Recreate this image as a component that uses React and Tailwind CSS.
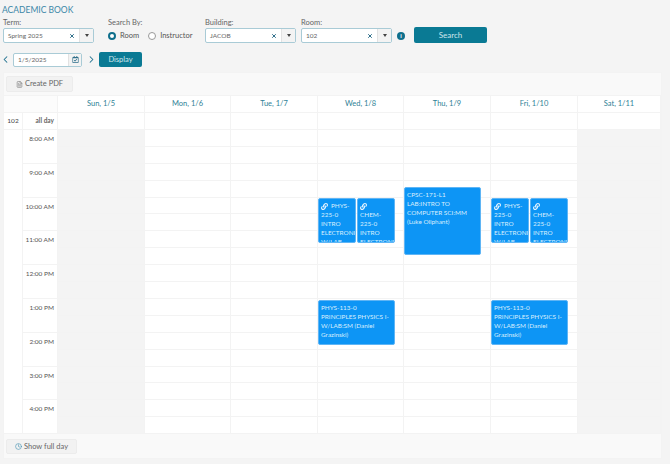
import { ChevronLeft, ChevronRight, Clock, FileText, X } from 'lucide-react'
import { FaLink, FaRegCalendarCheck } from 'react-icons/fa'

const DAYS = [
  { label: 'Sun, 1/5', w: 'w-[87px]', off: true },
  { label: 'Mon, 1/6', w: 'w-[86px]' },
  { label: 'Tue, 1/7', w: 'w-[87px]' },
  { label: 'Wed, 1/8', w: 'w-[86px]', events: 'wed' },
  { label: 'Thu, 1/9', w: 'w-[87px]', events: 'thu' },
  { label: 'Fri, 1/10', w: 'w-[87px]', events: 'wed' },
  { label: 'Sat, 1/11', w: 'flex-1', off: true },
]

const HOURS = ['8:00 AM', '9:00 AM', '10:00 AM', '11:00 AM', '12:00 PM', '1:00 PM', '2:00 PM', '3:00 PM', '4:00 PM']

const borderClass = 'border-[#f3f3f3]'

function Combo({ value, width }) {
  return (
    <div className={`flex items-center h-[15px] border border-[#a9cbd6] rounded-[2px] bg-white text-[6.5px] text-[#666] ${width}`}>
      <span className="flex-1 pl-1">{value}</span>
      <X size={6} strokeWidth={4} className="text-[#2f6f8a] mr-[4px]" />
      <span className="flex items-center justify-center w-[14px] h-full bg-[#f3f3f3] border-l border-[#e2e2e2]">
        <span className="w-0 h-0 border-x-[2px] border-x-transparent border-t-[3px] border-t-[#444]" />
      </span>
    </div>
  )
}

function Field({ label, children, className }) {
  return (
    <div className={className}>
      <div className="text-[7.5px] leading-[10px] text-[#666]">{label}</div>
      {children}
    </div>
  )
}

function Radio({ label, checked }) {
  return (
    <div className="flex items-center gap-[4px] text-[7.5px] text-[#555]">
      {checked
        ? <span className="w-[8px] h-[8px] rounded-full border-[2.5px] border-[#0f6f8c] bg-white" />
        : <span className="w-[8px] h-[8px] rounded-full border border-[#999] bg-white" />}
      {label}
    </div>
  )
}

function EventBox({ className, link, children }) {
  return (
    <div className={`absolute overflow-hidden rounded-[2px] bg-[#0d95f5] border border-[#5fb5f5] text-[6.4px] leading-[9px] text-[#d9eefd] whitespace-nowrap pl-[2px] pt-[2px] ${className}`}>
      {link && <FaLink size={7} className="inline mr-[3px] text-[#e6f4fe]" />}
      {children}
    </div>
  )
}

function DayEvents({ kind }) {
  if (kind === 'thu') {
    return (
      <EventBox className="left-0 w-[77px] top-[57px] h-[68px]">
        CPSC-171-L1<br />LAB:INTRO TO<br />COMPUTER SCI:MM<br />(Luke Oliphant)
      </EventBox>
    )
  }
  return (
    <>
      <EventBox link className="left-0 w-[38px] top-[68px] h-[45px]">
        PHYS-<br />225-0<br />INTRO<br />ELECTRONICS<br />W/LAB
      </EventBox>
      <EventBox link className="left-[39px] w-[38px] top-[68px] h-[45px]">
        <br />CHEM-<br />225-0<br />INTRO<br />ELECTRONICS
      </EventBox>
      <EventBox className="left-0 w-[77px] top-[169.5px] h-[45.5px]">
        PHYS-113-0<br />PRINCIPLES PHYSICS I-<br />W/LAB:SM (Daniel<br />Grazinski)
      </EventBox>
    </>
  )
}

function DayColumn({ day }) {
  return (
    <div className={`relative border-r ${borderClass} ${day.w} ${day.off ? 'bg-[#f4f4f4]' : 'bg-white'}`}>
      {HOURS.map((h) => (
        <div key={h} className="h-[33.8px]">
          <div className={`h-[16.9px] border-b ${borderClass}`} />
          <div className={`h-[16.9px] border-b ${borderClass}`} />
        </div>
      ))}
      {day.events && <DayEvents kind={day.events} />}
    </div>
  )
}

export default function App() {
  return (
    <div className="w-[670px] h-[464px] overflow-hidden bg-[#f4f4f4] font-['Lato','Open_Sans',sans-serif]">
      <div className="h-[18px] pl-[2px] pt-[4px] text-[8.5px] leading-[12px] text-[#3b87a8]">ACADEMIC BOOK</div>

      {/* Search form */}
      <div className="flex items-end h-[25px] pl-[3px]">
        <Field label="Term:" className="w-[105px]">
          <Combo value="Spring 2025" width="w-[91px]" />
        </Field>
        <Field label="Search By:" className="w-[97px]">
          <div className="flex gap-[9px] h-[15px] items-center">
            <Radio label="Room" checked />
            <Radio label="Instructor" />
          </div>
        </Field>
        <Field label="Building:" className="w-[96px]">
          <Combo value="JACOB" width="w-[91px]" />
        </Field>
        <Field label="Room:">
          <Combo value="102" width="w-[91px]" />
        </Field>
        <span className="flex items-center justify-center ml-[5px] mb-[3px] w-[8px] h-[8px] rounded-full bg-[#0f6f8c] text-[6px] leading-none font-bold text-white">i</span>
        <button className="ml-[9px] w-[73px] h-[16px] rounded-[2px] bg-[#0a7a94] text-[8px] text-[#cfe6ec]">Search</button>
      </div>

      {/* Date row */}
      <div className="flex items-center h-[15px] mt-[9px]">
        <ChevronLeft size={11} strokeWidth={2.25} className="text-[#1d6f8e]" />
        <div className="flex items-center ml-[2px] w-[69px] h-[14px] border border-[#a9cbd6] rounded-[2px] bg-white text-[6.5px] text-[#666]">
          <span className="flex-1 pl-1">1/5/2025</span>
          <span className="flex items-center justify-center w-[13px] h-full bg-[#f3f3f3] border-l border-[#e2e2e2]">
            <FaRegCalendarCheck size={7} className="text-[#2f6f8a]" />
          </span>
        </div>
        <ChevronRight size={11} strokeWidth={2.25} className="ml-[4px] text-[#1d6f8e]" />
        <button className="ml-[2px] w-[43px] h-[15px] rounded-[2px] bg-[#0a7a94] text-[7.5px] text-[#cfe6ec]">Display</button>
      </div>

      {/* Calendar panel */}
      <div className={`ml-[3px] mt-[5px] w-[659px] h-[387px] border ${borderClass} bg-[#f9f9f9]`}>
        <div className="h-[22px] flex items-center pl-[2px]">
          <button className="flex items-center justify-center gap-[2px] w-[67px] h-[16px] rounded-[2px] bg-[#f2f2f2] border border-[#ececec] text-[7.5px] text-[#666]">
            <FileText size={7} className="text-[#777]" />
            Create PDF
          </button>
        </div>

        <div className={`flex h-[18px] border-y ${borderClass} bg-white`}>
          <div className={`w-[54px] shrink-0 border-r ${borderClass} bg-[#fcfcfc]`} />
          {DAYS.map((d) => (
            <div key={d.label} className={`flex items-center justify-center text-[7.5px] text-[#2f7f96] border-r ${borderClass} ${d.w}`}>{d.label}</div>
          ))}
        </div>

        <div className={`flex h-[17px] border-b ${borderClass} bg-white`}>
          <div className={`w-[19px] shrink-0 flex items-center justify-center border-r ${borderClass} text-[6.5px] text-[#444]`}>102</div>
          <div className={`w-[35px] shrink-0 flex items-center justify-end pr-[3px] border-r ${borderClass} text-[6.5px] font-bold text-[#666]`}>all day</div>
          {DAYS.map((d) => (
            <div key={d.label} className={`border-r ${borderClass} ${d.w}`} />
          ))}
        </div>

        <div className={`flex h-[304.2px] overflow-hidden border-b ${borderClass}`}>
          <div className={`w-[19px] shrink-0 border-r ${borderClass} bg-white`} />
          <div className={`w-[35px] shrink-0 border-r ${borderClass} bg-white`}>
            {HOURS.map((h) => (
              <div key={h} className={`h-[33.8px] pr-[3px] pt-[5px] text-right text-[6.5px] leading-[8px] text-[#555] border-b ${borderClass}`}>{h}</div>
            ))}
          </div>
          {DAYS.map((d) => <DayColumn key={d.label} day={d} />)}
        </div>

        <div className="h-[24px] flex items-center pl-[2px] pt-[1px]">
          <button className="flex items-center justify-center gap-[2px] w-[71px] h-[15px] rounded-[2px] bg-[#f2f2f2] border border-[#ececec] text-[7.5px] text-[#666]">
            <Clock size={7} className="text-[#3f8fb0]" />
            Show full day
          </button>
        </div>
      </div>
    </div>
  )
}
